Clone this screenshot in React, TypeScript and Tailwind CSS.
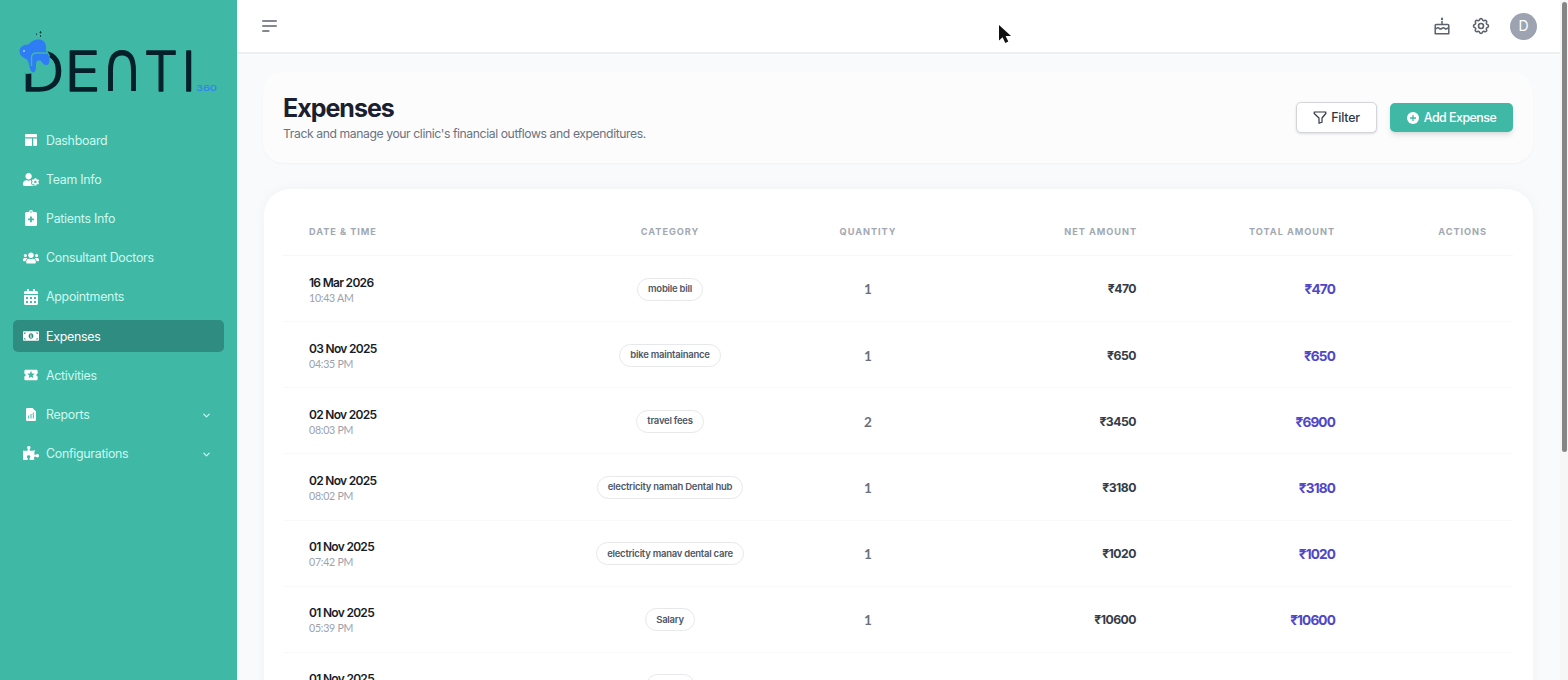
import type { ReactNode } from 'react'
import { FaUserCog, FaUsers, FaCalendarAlt, FaMoneyBillAlt, FaPuzzlePiece } from 'react-icons/fa'
import { MdLocalActivity } from 'react-icons/md'
import { HiOutlineCog } from 'react-icons/hi'
import { ChevronDown } from 'lucide-react'

const DashboardIcon = () => (
  <svg viewBox="0 0 12 12" className="size-3" fill="currentColor">
    <path d="M1 0h10a1 1 0 0 1 1 1v2.2H0V1a1 1 0 0 1 1-1zM0 4.4h7V12H1a1 1 0 0 1-1-1zM8.2 4.4H12V11a1 1 0 0 1-1 1H8.2z" />
  </svg>
)

const PatientIcon = () => (
  <svg viewBox="0 0 12 16" className="h-4 w-3" fill="currentColor" fillRule="evenodd">
    <path d="M4 2a2 2 0 0 1 4 0h2.5A1.5 1.5 0 0 1 12 3.5v11a1.5 1.5 0 0 1-1.5 1.5h-9A1.5 1.5 0 0 1 0 14.5v-11A1.5 1.5 0 0 1 1.5 2zM6 1.2a.8.8 0 1 0 0 1.6.8.8 0 0 0 0-1.6zM5.1 6.5v2h-2v1.8h2v2h1.8v-2h2V8.5h-2v-2z" />
  </svg>
)

const ReportIcon = () => (
  <svg viewBox="0 0 10 13" className="h-[13px] w-2.5" fill="currentColor" fillRule="evenodd">
    <path d="M1.3 0H6.5L10 3.5v8.2A1.3 1.3 0 0 1 8.7 13H1.3A1.3 1.3 0 0 1 0 11.7V1.3A1.3 1.3 0 0 1 1.3 0zM2.2 7.5v3h1v-3zM4.5 6v4.5h1V6zM6.8 4.5v6h1v-6z" />
  </svg>
)

const menu: { label: string; icon: ReactNode; active?: boolean; sub?: boolean }[] = [
  { label: 'Dashboard', icon: <DashboardIcon /> },
  { label: 'Team Info', icon: <FaUserCog className="h-[13px] w-4" /> },
  { label: 'Patients Info', icon: <PatientIcon /> },
  { label: 'Consultant Doctors', icon: <FaUsers className="size-4" /> },
  { label: 'Appointments', icon: <FaCalendarAlt className="size-4" /> },
  { label: 'Expenses', icon: <FaMoneyBillAlt className="size-4" />, active: true },
  { label: 'Activities', icon: <MdLocalActivity className="size-4" /> },
  { label: 'Reports', icon: <ReportIcon />, sub: true },
  { label: 'Configurations', icon: <FaPuzzlePiece className="size-4" />, sub: true },
]

const expenses = [
  { date: '16 Mar 2026', time: '10:43 AM', category: 'mobile bill', qty: 1, net: 470, total: 470 },
  { date: '03 Nov 2025', time: '04:35 PM', category: 'bike maintainance', qty: 1, net: 650, total: 650 },
  { date: '02 Nov 2025', time: '08:03 PM', category: 'travel fees', qty: 2, net: 3450, total: 6900 },
  { date: '02 Nov 2025', time: '08:02 PM', category: 'electricity namah Dental hub', qty: 1, net: 3180, total: 3180 },
  { date: '01 Nov 2025', time: '07:42 PM', category: 'electricity manav dental care', qty: 1, net: 1020, total: 1020 },
  { date: '01 Nov 2025', time: '05:39 PM', category: 'Salary', qty: 1, net: 10600, total: 10600 },
  { date: '01 Nov 2025', time: '', category: '', qty: '', net: '', total: '' },
]

function Logo() {
  return (
    <svg viewBox="0 0 237 110" className="block h-[110px] w-full shrink-0">
      <g fill="#06202a" stroke="#06202a" strokeWidth="1.3" strokeLinejoin="round" fontFamily="Inter, sans-serif" fontSize="55" fontWeight="300">
        <text y="91" x="20.5" textLength="44" lengthAdjust="spacingAndGlyphs">D</text>
        <text y="91" x="64.500" textLength="36" lengthAdjust="spacingAndGlyphs">E</text>
        <text y="91" x="100.5" fontFamily="DejaVu Sans, sans-serif" fontSize="71" fontWeight="400" strokeWidth="0" textLength="43" lengthAdjust="spacingAndGlyphs">∩</text>
        <text y="91" x="144" textLength="34" lengthAdjust="spacingAndGlyphs">T</text>
        <text y="91" x="181.5">I</text>
      </g>
      <text x="196" y="90.5" fill="#2f80f0" fontFamily="Inter, sans-serif" fontSize="8" fontWeight="500" textLength="21" lengthAdjust="spacingAndGlyphs">360</text>
      {/* tooth */}
      <path d="M20 46l27 4 3 6-13 17-11 1-6-8z" fill="#40b8a6" />
      <path d="M19.500 51c0-4 4-6.500 9-6.500 3-4 7-5.500 12-5 5 1.500 6 6 5.500 9.500 0 3 2 4 3 7.500 1 4 .5 8-2 8.500-4 .5-5-4-7-4.500-3-.5-4 1-4 5.500 0 4-1 6.500-3 6.500-4-1-3-9-6-13-4-2-7.500-4-7.500-8.500z" fill="#2f7df4" />
      <path d="M31.5 66v-8q0-5 5-5h11" fill="none" stroke="#40b8a6" strokeWidth="1.4" />
      <circle cx="24" cy="51" r="1" fill="#9bd7ff" />
      <path d="M40.5 31v2.5M40.5 35v2M36.500 33.5v1.5M39.500 32.5h2" stroke="#0b3b3a" strokeWidth="0.9" />
    </svg>
  )
}

function Sidebar() {
  return (
    <aside className="flex w-[237px] shrink-0 flex-col bg-[#40b8a6]">
      <Logo />
      <nav className="mt-[13.6px] flex flex-col gap-[6.4px] px-[13px]">
        {menu.map((item) => (
          <div
            key={item.label}
            className={`flex h-[32.8px] items-center rounded-[5px] pr-3 pl-[10px] text-[12.4px] ${
              item.active ? 'bg-[#2f8c80] text-white' : 'text-[#cdfaef]'
            }`}
          >
            <span className="flex w-4 justify-center text-white">{item.icon}</span>
            <span className="ml-[7px] flex-1 pt-0.5 tracking-[-0.28px]">{item.label}</span>
            {item.sub && <ChevronDown className="mt-0.5 size-[11px]" strokeWidth={2.5} />}
          </div>
        ))}
      </nav>
    </aside>
  )
}

function Header() {
  return (
    <header className="flex h-[54px] shrink-0 items-center border-b-2 border-[#edf0f1] bg-white pr-[23px] pl-[25px] text-[#5b616d]">
      <svg viewBox="0 0 15 13" className="h-[13px] w-[15px]" stroke="currentColor" strokeWidth="1.6" strokeLinecap="round">
        <path d="M.8 1h13.4M.8 6h13.4M.8 11h6" />
      </svg>
      <div className="ml-auto flex items-center">
        <svg viewBox="0 0 16 18" className="mb-px h-[18px] w-4" fill="none" stroke="currentColor" strokeWidth="1.5" strokeLinejoin="round">
          <path d="M1.2 16.8V8.5a1 1 0 0 1 1-1h11.6a1 1 0 0 1 1 1v8.3zM8 7.5V4M1.2 12c1.4 0 1.4-1.3 2.7-1.3S5.3 12 6.6 12 8 10.700 9.3 10.700s1.4 1.3 2.7 1.3 1.4-1.3 2.8-1.3" />
          <path d="M8 0l1.200 2a1.200 1.200 0 1 1-2.400 0z" fill="currentColor" stroke="none" />
        </svg>
        <HiOutlineCog className="ml-[21px] size-[20px] [&_path]:stroke-[1.9]" />
        <div className="ml-[19px] flex size-[27px] items-center justify-center rounded-full bg-[#9ea3b2] text-sm text-white">D</div>
      </div>
    </header>
  )
}

function PageTitle() {
  return (
    <section className="flex h-[91px] items-center rounded-[20px] bg-[#fcfcfc] pr-5 pl-5 shadow-[0_1px_2px_rgba(0,0,0,0.03)]">
      <div>
        <h1 className="pt-px text-[25px] leading-8 font-bold tracking-[-1px] text-[#1a2030]">Expenses</h1>
        <p className="text-[12.2px] leading-5 tracking-[-0.41px] text-[#6b7280]">
          Track and manage your clinic's financial outflows and expenditures.
        </p>
      </div>
      <div className="ml-auto flex items-center gap-[13px]">
        <button className="flex h-[31px] w-[81px] items-center justify-center gap-1 rounded-[5px] border border-[#d3d5da] bg-white text-[12.4px] font-medium tracking-[-0.2px] text-[#303744] shadow-sm">
          <svg viewBox="0 0 14 13" className="h-[13px] w-3.5" fill="none" stroke="currentColor" strokeWidth="1.2" strokeLinejoin="round">
            <path d="M1.2 1h11.6v1.5L9 7v4.3l-3 1V7L1.2 2.5z" />
          </svg>
          <span className="pt-px">Filter</span>
        </button>
        <button className="flex h-[29px] w-[123px] items-center justify-center gap-[5px] rounded-[5px] bg-[#40b8a6] text-[12.4px] font-medium tracking-[-0.5px] text-white shadow-md">
          <svg viewBox="0 0 12 12" className="size-3">
            <circle cx="6" cy="6" r="6" fill="white" />
            <path d="M6 3v6M3 6h6" stroke="#40b8a6" strokeWidth="1.3" />
          </svg>
          <span className="pt-px">Add Expense</span>
        </button>
      </div>
    </section>
  )
}

const cols = 'grid grid-cols-[284px_206px_190px_199px_199px_152px] items-center'

function ExpenseTable() {
  return (
    <section className="mt-[26px] ml-px h-[600px] rounded-t-[26px] bg-white pl-[19px] shadow-[0_0_12px_rgba(15,23,42,0.04)]">
      <div className={`${cols} h-[67px] w-[1230px] border-b border-[#f7f7f8] pt-5 text-[9.2px] font-bold tracking-[0.95px] text-[#a2a8b2] uppercase`}>
        <span className="pl-[26px]">Date &amp; Time</span>
        <span className="text-center">Category</span>
        <span className="text-center">Quantity</span>
        <span className="pr-[25px] text-right">Net Amount</span>
        <span className="pr-[26px] text-right">Total Amount</span>
        <span className="pr-[26px] text-right">Actions</span>
      </div>
      {expenses.map((e, i) => (
        <div key={i} className={`${cols} h-[66.15px] w-[1230px] border-b border-[#f9f9fa] pt-0.5`}>
          <div className="pl-[26px]">
            <div className="pt-px text-[12px] leading-4 font-semibold tracking-[-0.7px] text-[#171c27]">{e.date}</div>
            <div className="h-[15px] font-['Lato',sans-serif] text-[10.6px] leading-[15px] tracking-[-0.25px] text-[#9ca1ab]">{e.time}</div>
          </div>
          <div className="flex justify-center">
            <span className="mb-px flex h-[23px] min-w-[49px] items-center rounded-full border border-[#e7e8ec] bg-white px-[10px] text-[9.5px] font-semibold tracking-[-0.25px] text-[#505866]">
              {e.category}
            </span>
          </div>
          <span className="text-center font-['Lato',sans-serif] text-[13.5px] font-bold text-[#69707c]">{e.qty}</span>
          <span className="pr-[26px] text-right text-[12.2px] font-bold tracking-[-0.5px] text-[#353c49]">{e.net && `₹${e.net}`}</span>
          <span className="pr-[26px] text-right text-[13.6px] font-bold tracking-[-0.85px] text-[#5046c8]">{e.total && `₹${e.total}`}</span>
          <span />
        </div>
      ))}
    </section>
  )
}

export default function App() {
  return (
    <div className="relative flex h-[680px] w-[1568px] overflow-hidden bg-[#f8fafc] font-['Inter',sans-serif]">
      <Sidebar />
      <div className="flex min-w-0 flex-1 flex-col overflow-hidden">
        <Header />
        <main className="min-h-0 flex-1 overflow-hidden pt-[18px] pr-[27px] pl-[26px]">
          <PageTitle />
          <ExpenseTable />
        </main>
      </div>
      <div className="w-2 shrink-0 bg-[#f6f6f6] pt-0.5 pl-0.5">
        <div className="h-[450px] w-[5px] rounded-full bg-[#858585]" />
      </div>
      <svg viewBox="0 0 12 19" className="absolute top-[25px] left-[999px] h-[19px] w-3">
        <path d="M0 0v15.5l3.6-3.3 2.7 5.8 3-1.4-2.7-5.5H12z" fill="#111" />
      </svg>
    </div>
  )
}
